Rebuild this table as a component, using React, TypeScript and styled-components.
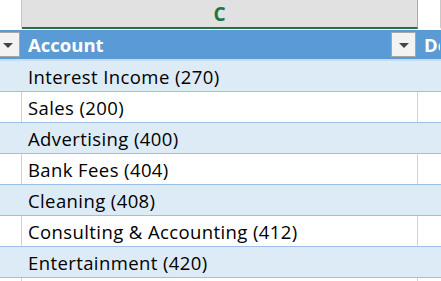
import React from "react";
import styled, { createGlobalStyle } from "styled-components";

const Global = createGlobalStyle`
  html, body { margin: 0; padding: 0; background: #ffffff; }
  body { font-family: "Open Sans", "Noto Sans", sans-serif; overflow: hidden; }
`;

const Sheet = styled.div`
  width: 441px;
  height: 281px;
  overflow: hidden;
  display: flex;
  flex-direction: column;
`;

const ColHeaderRow = styled.div`
  display: flex;
  height: 30px;
  flex: none;
  border-bottom: 1px solid #ffffff;
  box-sizing: border-box;
`;

const ColHead = styled.div<{ $w: number; $selected?: boolean }>`
  width: ${(p) => p.$w}px;
  flex: none;
  box-sizing: border-box;
  display: flex;
  align-items: center;
  justify-content: center;
  background: ${(p) => (p.$selected ? "#e1e1e1" : "#ffffff")};
  border-right: 1px solid ${(p) => (p.$selected ? "#ababab" : "#c8c8c8")};
  border-bottom: 2px solid ${(p) => (p.$selected ? "#217346" : "#ffffff")};
  color: #217346;
  font-family: "Open Sans", sans-serif;
  font-weight: 700;
  font-size: 19px;
  padding-top: 1px;
`;

const Row = styled.div<{ $kind: "header" | "band" | "plain" }>`
  display: flex;
  height: 31px;
  flex: none;
  box-sizing: border-box;
  background: ${(p) =>
    p.$kind === "header" ? "#5b9bd5" : p.$kind === "band" ? "#ddebf7" : "#ffffff"};
  border-bottom: ${(p) => (p.$kind === "header" ? "2px solid #c5dcf1" : "1px solid #9bc2e6")};
`;

const Cell = styled.div<{ $w: number; $grid?: boolean; $head?: boolean }>`
  width: ${(p) => p.$w}px;
  flex: none;
  box-sizing: border-box;
  display: flex;
  align-items: center;
  overflow: hidden;
  white-space: nowrap;
  padding-left: 6px;
  border-right: 1px solid ${(p) => (p.$grid ? "#d4d4d4" : "transparent")};
  font-size: 18.5px;
  letter-spacing: ${(p) => (p.$head ? "0" : "0.4px")};
  color: ${(p) => (p.$head ? "#ffffff" : "#000000")};
  font-weight: ${(p) => (p.$head ? 700 : 400)};
`;

const Label = styled.span`
  flex: 1;
  overflow: hidden;
`;

const EdgeCell = styled.div<{ $w: number; $grid?: boolean }>`
  width: ${(p) => p.$w}px;
  flex: none;
  box-sizing: border-box;
  display: flex;
  align-items: center;
  justify-content: flex-end;
  overflow: hidden;
  border-right: 1px solid ${(p) => (p.$grid ? "#d4d4d4" : "transparent")};
`;

const FilterButton = styled.div`
  width: 25px;
  height: 25px;
  flex: none;
  box-sizing: border-box;
  margin-right: 1px;
  background: #f3f3f3;
  border: 1px solid #a6a6a6;
  display: flex;
  align-items: center;
  justify-content: center;
  &::after {
    content: "";
    width: 0;
    height: 0;
    border-left: 5px solid transparent;
    border-right: 5px solid transparent;
    border-top: 5px solid #444444;
    margin-top: 1px;
  }
`;

const accounts = [
  "Interest Income (270)",
  "Sales (200)",
  "Advertising (400)",
  "Bank Fees (404)",
  "Cleaning (408)",
  "Consulting & Accounting (412)",
  "Entertainment (420)",
  "",
];

const W_B = 22;
const W_C = 396;
const W_D = 23;

export default function App() {
  return (
    <Sheet>
      <Global />
      <ColHeaderRow>
        <ColHead $w={W_B} />
        <ColHead $w={W_C} $selected>
          C
        </ColHead>
        <ColHead $w={W_D} />
      </ColHeaderRow>
      <Row $kind="header">
        <EdgeCell $w={W_B}>
          <FilterButton />
        </EdgeCell>
        <Cell $w={W_C} $head>
          <Label>Account</Label>
          <FilterButton />
        </Cell>
        <Cell $w={W_D} $head>
          De
        </Cell>
      </Row>
      {accounts.map((a, i) => {
        const band = i % 2 === 0;
        return (
          <Row key={i} $kind={band ? "band" : "plain"}>
            <EdgeCell $w={W_B} $grid={!band} />
            <Cell $w={W_C} $grid={!band}>
              {a}
            </Cell>
            <Cell $w={W_D} />
          </Row>
        );
      })}
    </Sheet>
  );
}
